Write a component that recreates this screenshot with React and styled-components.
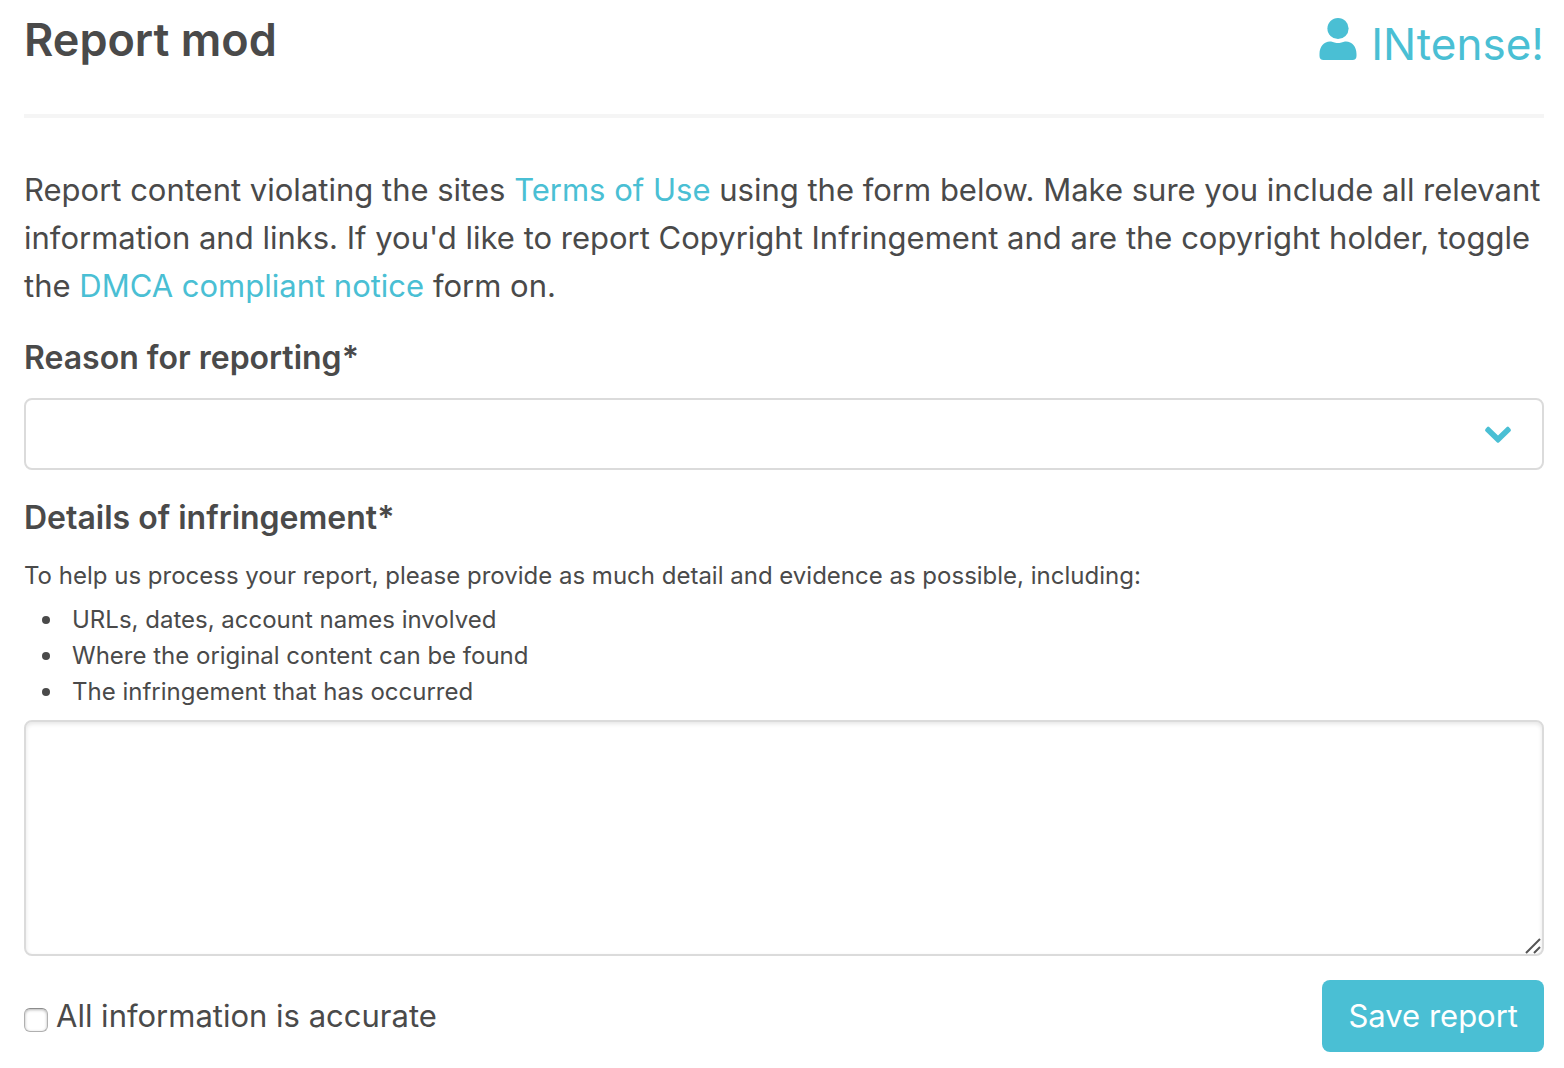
import React from "react";
import styled, { createGlobalStyle } from "styled-components";

const accent = "#4abfd4";

const GlobalStyle = createGlobalStyle`
  * {
    box-sizing: border-box;
  }

  body {
    margin: 0;
    background: #fff;
    color: #4a4a4a;
    font-family: Inter, "Liberation Sans", sans-serif;
    font-size: 31px;
    line-height: 48px;
  }
`;

const Page = styled.main`
  padding: 0 20px 16px 24px;
`;

const Header = styled.header`
  display: flex;
  justify-content: space-between;
  align-items: flex-start;
  height: 118px;
  padding-top: 14px;
  border-bottom: 4px solid #f5f5f5;
`;

const Title = styled.h1`
  margin: 0;
  font-size: 45px;
  font-weight: 600;
  line-height: 52px;
`;

const Link = styled.a`
  color: ${accent};
  text-decoration: none;
`;

const UserLink = styled(Link)`
  display: flex;
  gap: 14px;
  font-size: 44px;
  line-height: 60px;
`;

const UserIcon = styled.svg`
  width: 38px;
  height: 44px;
  margin-top: 3px;
  fill: ${accent};
`;

const Intro = styled.p`
  margin: 48px 0 24px;
`;

const Label = styled.label`
  display: block;
  margin-bottom: 16px;
  font-size: 32px;
  font-weight: 600;
`;

const SelectWrap = styled.div`
  position: relative;
  margin-bottom: 24px;
`;

const Select = styled.select`
  display: block;
  width: 100%;
  height: 72px;
  padding: 0 80px 0 24px;
  border: 2px solid #dbdbdb;
  border-radius: 8px;
  background: #fff;
  color: inherit;
  font: inherit;
  appearance: none;
`;

const Chevron = styled.svg`
  position: absolute;
  top: 28px;
  right: 32px;
  width: 28px;
  height: 18px;
  fill: ${accent};
  pointer-events: none;
`;

const Help = styled.div`
  margin-bottom: 10px;
  font-size: 24px;
  line-height: 36px;
`;

const HelpText = styled.p`
  margin: 0 0 8px;
`;

const List = styled.ul`
  margin: 0;
  padding-left: 18px;
  list-style: none;
`;

const Item = styled.li`
  display: flex;
  align-items: center;
  gap: 22px;

  &::before {
    content: "";
    width: 8px;
    height: 8px;
    border-radius: 50%;
    background: currentColor;
  }
`;

const TextareaWrap = styled.div`
  position: relative;
`;

const Textarea = styled.textarea`
  display: block;
  width: 100%;
  height: 236px;
  padding: 20px 24px;
  border: 2px solid #dbdbdb;
  border-radius: 8px;
  box-shadow: inset 0 2px 4px rgba(10, 10, 10, 0.1);
  color: inherit;
  font: inherit;
  resize: vertical;

  &::-webkit-resizer {
    background: transparent;
  }
`;

const Grip = styled.svg`
  position: absolute;
  right: 3px;
  bottom: 2px;
  width: 16px;
  height: 16px;
  fill: none;
  stroke: #555;
  stroke-width: 2;
  pointer-events: none;
`;

const Footer = styled.div`
  display: flex;
  justify-content: space-between;
  align-items: center;
  margin-top: 24px;
`;

const CheckLabel = styled.label`
  display: flex;
  align-items: center;
  gap: 8px;
`;

const Checkbox = styled.input`
  width: 24px;
  height: 24px;
  margin: 8px 0 0;
  border: 1px solid #b0b0b0;
  border-top-color: #8c8c8c;
  border-radius: 6px;
  background: #fff;
  box-shadow: inset 0 1px 3px rgba(0, 0, 0, 0.3);
  appearance: none;

  &:checked {
    background: ${accent};
  }
`;

const Button = styled.button`
  height: 72px;
  padding: 0 26px;
  border: 0;
  border-radius: 8px;
  background: ${accent};
  color: #fff;
  font: inherit;
  cursor: pointer;
`;

const App = () => (
  <Page>
    <GlobalStyle />
    <Header>
      <Title>Report mod</Title>
      <UserLink href="#">
        <UserIcon viewBox="0 0 38 44" aria-hidden="true">
          <circle cx="19" cy="11.500" r="10.600" />
          <path d="M0.500 37C0.500 29.500 5 24.500 11 24.500C14 24.500 15 26 19 26S24 24.500 27 24.500C33 24.500 37.500 29.500 37.500 37V39C37.500 41.500 36 43 33.500 43H4.500C2 43 0.500 41.500 0.500 39Z" />
        </UserIcon>
        INtense!
      </UserLink>
    </Header>
    <Intro>
      Report content violating the sites <Link href="#">Terms of Use</Link> using
      the form below. Make sure you include all relevant information and links.
      If you'd like to report Copyright Infringement and are the copyright
      holder, toggle the <Link href="#">DMCA compliant notice</Link> form on.
    </Intro>
    <form onSubmit={(e) => e.preventDefault()}>
      <Label htmlFor="reason">Reason for reporting*</Label>
      <SelectWrap>
        <Select id="reason" defaultValue="">
          <option value=""></option>
        </Select>
        <Chevron viewBox="0 0 28 18" aria-hidden="true">
          <path d="M1.500 3L3.200 1Q4.200 0 5.200 1L14 9.400L22.800 1Q23.800 0 24.800 1L26.500 3Q27.500 4.200 26.500 5.200L15.200 16.300Q14 17.300 12.800 16.300L1.500 5.200Q0.500 4.200 1.500 3Z" />
        </Chevron>
      </SelectWrap>
      <Label htmlFor="details">Details of infringement*</Label>
      <Help id="details-help">
        <HelpText>
          To help us process your report, please provide as much detail and
          evidence as possible, including:
        </HelpText>
        <List>
          <Item>URLs, dates, account names involved</Item>
          <Item>Where the original content can be found</Item>
          <Item>The infringement that has occurred</Item>
        </List>
      </Help>
      <TextareaWrap>
        <Textarea id="details" aria-describedby="details-help" />
        <Grip viewBox="0 0 16 16" aria-hidden="true">
          <path d="M1 15L15 1M9 15L15 9" />
        </Grip>
      </TextareaWrap>
      <Footer>
        <CheckLabel htmlFor="accurate">
          <Checkbox type="checkbox" id="accurate" />
          All information is accurate
        </CheckLabel>
        <Button type="submit">Save report</Button>
      </Footer>
    </form>
  </Page>
);

export default App;
